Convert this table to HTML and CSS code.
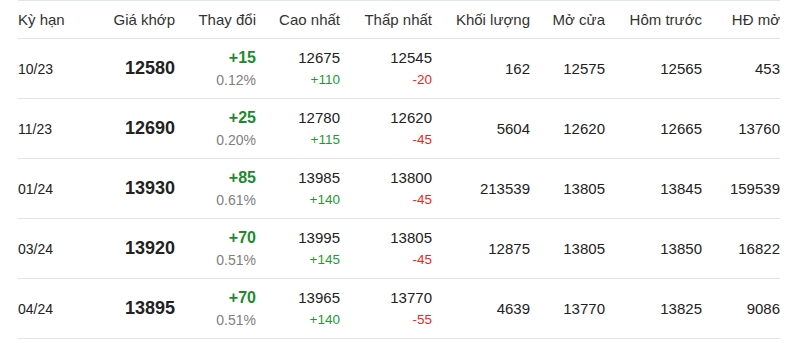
FILE: index.html
```html
<!DOCTYPE html>
<html lang="vi">
<head>
<meta charset="utf-8">
<link rel="stylesheet" href="styles.css">
</head>
<body>
<div class="table">
  <div class="row head">
    <div class="c left">Kỳ hạn</div>
    <div class="c">Giá khớp</div>
    <div class="c">Thay đổi</div>
    <div class="c">Cao nhất</div>
    <div class="c">Thấp nhất</div>
    <div class="c">Khối lượng</div>
    <div class="c">Mở cửa</div>
    <div class="c">Hôm trước</div>
    <div class="c">HĐ mở</div>
  </div>

  <div class="row">
    <div class="c left date">10/23</div>
    <div class="c price">12580</div>
    <div class="c"><span class="chg">+15</span><span class="pct">0.12%</span></div>
    <div class="c"><span class="num">12675</span><span class="sub up">+110</span></div>
    <div class="c"><span class="num">12545</span><span class="sub down">-20</span></div>
    <div class="c num">162</div>
    <div class="c num">12575</div>
    <div class="c num">12565</div>
    <div class="c num">453</div>
  </div>

  <div class="row">
    <div class="c left date">11/23</div>
    <div class="c price">12690</div>
    <div class="c"><span class="chg">+25</span><span class="pct">0.20%</span></div>
    <div class="c"><span class="num">12780</span><span class="sub up">+115</span></div>
    <div class="c"><span class="num">12620</span><span class="sub down">-45</span></div>
    <div class="c num">5604</div>
    <div class="c num">12620</div>
    <div class="c num">12665</div>
    <div class="c num">13760</div>
  </div>

  <div class="row">
    <div class="c left date">01/24</div>
    <div class="c price">13930</div>
    <div class="c"><span class="chg">+85</span><span class="pct">0.61%</span></div>
    <div class="c"><span class="num">13985</span><span class="sub up">+140</span></div>
    <div class="c"><span class="num">13800</span><span class="sub down">-45</span></div>
    <div class="c num">213539</div>
    <div class="c num">13805</div>
    <div class="c num">13845</div>
    <div class="c num">159539</div>
  </div>

  <div class="row">
    <div class="c left date">03/24</div>
    <div class="c price">13920</div>
    <div class="c"><span class="chg">+70</span><span class="pct">0.51%</span></div>
    <div class="c"><span class="num">13995</span><span class="sub up">+145</span></div>
    <div class="c"><span class="num">13805</span><span class="sub down">-45</span></div>
    <div class="c num">12875</div>
    <div class="c num">13805</div>
    <div class="c num">13850</div>
    <div class="c num">16822</div>
  </div>

  <div class="row">
    <div class="c left date">04/24</div>
    <div class="c price">13895</div>
    <div class="c"><span class="chg">+70</span><span class="pct">0.51%</span></div>
    <div class="c"><span class="num">13965</span><span class="sub up">+140</span></div>
    <div class="c"><span class="num">13770</span><span class="sub down">-55</span></div>
    <div class="c num">4639</div>
    <div class="c num">13770</div>
    <div class="c num">13825</div>
    <div class="c num">9086</div>
  </div>
</div>
</body>
</html>
```

FILE: styles.css
```css
html, body {
  margin: 0;
  padding: 0;
  background: #fff;
}
body {
  font-family: "Liberation Sans", Arial, sans-serif;
  color: #222;
}
.table {
  width: 762px;
  margin-left: 18px;
  border-top: 1px solid #dfe5ee;
}
.row {
  display: grid;
  grid-template-columns: 77px 80px 81px 84px 92px 98px 75px 97px 78px;
  height: 59px;
  border-bottom: 1px solid #dfe5ee;
}
.row.head {
  height: 37px;
  font-size: 15px;
  color: #333;
}
.c {
  display: flex;
  flex-direction: column;
  justify-content: center;
  align-items: flex-end;
  text-align: right;
  white-space: nowrap;
}
.c.left {
  align-items: flex-start;
  text-align: left;
}
.date {
  font-size: 14px;
}
.price {
  font-size: 18px;
  font-weight: bold;
}
.num {
  font-size: 15px;
  line-height: 22px;
}
.chg {
  font-size: 16px;
  font-weight: bold;
  color: #1e8a2e;
  line-height: 22px;
}
.pct {
  font-size: 14px;
  color: #808080;
  line-height: 22px;
}
.sub {
  font-size: 13.5px;
  line-height: 22px;
}
.up {
  color: #1e9a34;
}
.down {
  color: #e8281e;
}
```
